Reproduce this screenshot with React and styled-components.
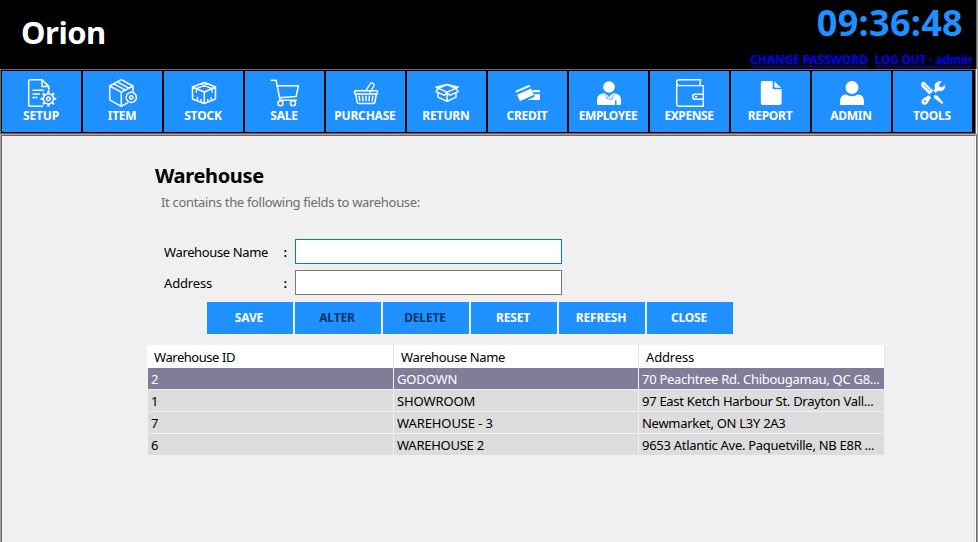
import React from "react";
import styled, { createGlobalStyle } from "styled-components";

const Global = createGlobalStyle`
  * { box-sizing: border-box; }
  body { margin: 0; background: #f0f0f0; overflow: hidden; }
  button, input { font: inherit; }
`;
const Window = styled.div`
  width: 978px; height: 542px; display: flex; flex-direction: column;
  background: #f0f0f0; color: #000; overflow: hidden;
  border-right: 1px solid #a0a0a0;
  font-family: "Noto Sans", "Open Sans", sans-serif; font-size: 13px; line-height: 18px;
`;
const Header = styled.header`
  height: 69px; flex: none; display: flex; justify-content: space-between;
  background: #000; border-right: 1px solid #696969;
`;
const Brand = styled.h1`
  margin: 0; padding: 11px 0 0 21px; color: #fff;
  font-size: 31px; line-height: 42px; font-weight: 700; letter-spacing: -0.5px;
`;
const Session = styled.div`display: flex; flex-direction: column; align-items: flex-end;`;
const Clock = styled.time`
  height: 52px; padding: 0 13px 0 0; color: #1e90ff; font-size: 36px; line-height: 45px; font-weight: 700;
  white-space: nowrap; letter-spacing: 0.3px;
`;
const Links = styled.nav`display: flex; gap: 7px; padding-right: 4px;`;
const SessionLink = styled.a`
  color: #0000f5; font-size: 12px; line-height: 16px; font-weight: 700; text-decoration: underline;
  text-decoration-skip-ink: none; text-underline-offset: 2px; text-decoration-thickness: 1px;
  white-space: nowrap; letter-spacing: ${(p) => p.$track || 0}px;
`;
const Toolbar = styled.nav`
  height: 65px; flex: none; display: flex; gap: 2px; padding: 1px 0 1px 1px; width: 976px;
  background: #000; border: 1px solid #696969;
`;
const Tool = styled.button`
  width: 79px; height: 61px; padding: 8px 0 0; border: 0; flex: none; background: #1e90ff; color: #fff;
  display: flex; flex-direction: column; align-items: center;
`;
const Glyph = styled.svg`width: 28px; height: 28px; flex: none; margin-left: 1px; overflow: visible;`;
const ToolLabel = styled.span`
  margin-top: 1px; padding-right: 1px;
  font-size: 12px; line-height: 16px; font-weight: 700; white-space: nowrap; letter-spacing: ${(p) => p.$track || 0}px;
`;
const Panel = styled.div`
  flex: 1; border: solid #a0a0a0; border-width: 1px 0 0 1px; border-right: 1px solid #696969; display: flex;
`;
const Workspace = styled.main`
  flex: 1; border: solid #696969; border-width: 1px 0 0 1px; border-right: 1px solid #fff;
  box-shadow: inset -1px 0 0 #e3e3e3; padding: 27px 0 0 145px;
`;
const Title = styled.h2`
  margin: 0 0 0 8px; font-size: 20px; line-height: 26px; font-weight: 700; letter-spacing: -0.35px;
`;
const Hint = styled.p`margin: 4px 0 0 14px; color: #6d6d6d; letter-spacing: -0.32px;`;
const Form = styled.form`display: grid; gap: 6px; margin: 28px 0 0 17px;`;
const Field = styled.label`
  display: grid; grid-template-columns: 119px 12px 267px; align-items: center; height: 25px;
`;
const FieldName = styled.span`letter-spacing: ${(p) => p.$track || 0}px; white-space: nowrap;`;
const Colon = styled.span`font-weight: 600; padding-left: 0.5px;`;
const Input = styled.input`
  width: 267px; height: 25px; border: 1px solid ${(p) => (p.$active ? "#0078d7" : "#7a7a7a")};
  border-radius: 0; background: #fff; padding: 2px 4px; outline: 0;
`;
const Actions = styled.div`display: flex; gap: 2px; margin: 7px 0 0 60px;`;
const Action = styled.button`
  width: 86px; height: 32px; padding: 0 2px 0 0; border: 0; background: #1e90ff;
  color: ${(p) => (p.disabled ? "#0b3566" : "#fff")};
  font-size: 12px; line-height: 16px; font-weight: 700; letter-spacing: -0.15px;
`;
const Table = styled.div`margin-top: 11px; width: 738px;`;
const HeadRow = styled.div`
  display: grid; grid-template-columns: 247px 245px 246px; height: 23px; background: #fff;
`;
const HeadCell = styled.div`
  padding: 3px 0 0 7px; border-right: 1px solid #e5e5e5; letter-spacing: ${(p) => p.$track || 0}px;
`;
const Row = styled.div`
  display: grid; grid-template-columns: 245px 244px 245px; gap: 1px; height: 21px; margin: 0 1px 1px;
  color: ${(p) => (p.$selected ? "#fff" : "#000")};
`;
const Cell = styled.div`
  padding: 2px 0 0 3px; height: 21px; white-space: nowrap; overflow: hidden;
  background: ${(p) => (p.$selected ? "#807d99" : "#dcdcdc")}; letter-spacing: ${(p) => p.$track || 0}px;
`;

const line = { fill: "none", stroke: "#fff", strokeWidth: 1.5, strokeLinejoin: "round", strokeLinecap: "round" };
const solid = { fill: "#fff" };
const teeth = [0, 45, 90, 135, 180, 225, 270, 315];

const glyphs = {
  SETUP: (
    <g {...line}>
      <path d="M14.5 27.3H2.2Q.7 27.3.7 25.8V2.2Q.7.7 2.2.7H14L20.7 7.4V11M14 .7V7.4H20.7M5 11.3H15.3M5 15H11.3M5 18.5H9" />
      <circle cx="20.4" cy="19.8" r="5.1" />
      <circle cx="20.4" cy="19.8" r="1.8" />
      {teeth.map((a) => (
        <path key={a} strokeWidth="2.2" strokeLinecap="butt" d="M20.4 14.6V12" transform={`rotate(${a} 20.4 19.8)`} />
      ))}
    </g>
  ),
  ITEM: (
    <g {...line}>
      <path d="M18.5 23.8L12.3 27.3.7 20.8V7L12.3.7 24 7V12.5M.7 7L12.3 13.2 24 7M12.3 13.2V27M4.8 4.9L16.6 11.1M8.3 2.9L20 9.2" />
      <circle cx="22.3" cy="18.4" r="5.1" />
      <circle cx="22.3" cy="18.4" r="1.7" />
    </g>
  ),
  STOCK: (
    <g {...line}>
      <path d="M14.3 3.5L25.5 8V20L14.3 24.5 2.5 20V8ZM2.5 8L14.3 13 25.5 8M14.3 13V24.5" />
      <path strokeWidth="1.3" d="M10.6 5L22 9.6M18 5L6.4 9.7M6.4 9.7V13.2M22 9.6V13.2M7.5 18.5V21.6M21.2 18.5V21.6M10.9 20.5V23M17.8 20.5V23" />
    </g>
  ),
  SALE: (
    <g {...line}>
      <path d="M.2 1.2H5L9.2 21.3H25.3M6.2 6.7H27.4L25.2 17.4 8.5 18.7" />
      <circle cx="9.4" cy="24.3" r="2.5" />
      <circle cx="22" cy="24.3" r="2.5" />
    </g>
  ),
  PURCHASE: (
    <g {...line}>
      <rect x="2.5" y="11.8" width="23" height="3.3" rx="1" />
      <path d="M3.7 15.2L5 22.8Q5.3 24.4 6.8 24.4H21.3Q22.8 24.4 23 22.8L24.4 15.2M7.2 17.2L7.8 21.8M10.6 17.2L11 21.8M14 17.2V21.8M17.4 17.2L17.1 21.8M20.8 17.2L20.3 21.8" />
      <path strokeWidth="1.3" d="M13.8 11.8L18.2 4.8Q19 3.4 20.8 4.3 22.6 5.2 21.9 6.8L18 13.4" />
    </g>
  ),
  RETURN: (
    <g {...line} strokeWidth="1.4">
      <path d="M14 5.5L5.3 9.4 14 13.2 22.8 9.4ZM5.3 9.4L3 12.6 11.4 16.4 14 13.2 16.7 16.4 25.2 12.6 22.8 9.4 25.2 8.3 14 5.5 3 8.3 5.3 9.4M5 14V18.2L14 22.3 23 18.2V14M14 13.2V22" />
    </g>
  ),
  CREDIT: (
    <g {...solid}>
      <g transform="rotate(-24 10.8 14)">
        <path d="M3 9.3Q3 8.3 4 8.3H17.5Q18.5 8.3 18.5 9.3V10.3H3ZM3 12.4H18.5V18.5Q18.5 19.5 17.5 19.5H4Q3 19.5 3 18.5Z" />
      </g>
      <path d="M18.5 11H25Q26 11 26 12V13.3H19.4ZM20.2 15.2H26V20Q26 21 25 21H13.3Q18 19.3 20.7 17.5Z" />
    </g>
  ),
  EMPLOYEE: (
    <g {...solid}>
      <circle cx="14" cy="8" r="5.8" />
      <path d="M10 14.2L14 17.5 18 14.2Q26 14.3 26 21V24.8Q26 26 24.8 26H21.5V21.2H20V26H3.2Q2 26 2 24.8V21Q2 14.3 10 14.2Z" />
      <path d="M9.8 14.5L12.2 18.8 14.2 17.3 17.2 19.7 19 14.8M10.6 18.8L16.2 20.8 18.5 18.8" stroke="#1e90ff" strokeWidth=".6" fill="none" />
    </g>
  ),
  EXPENSE: (
    <g {...line} strokeWidth="1.4">
      <path d="M2.6 6.6H27.3V27.3H3.2Q.7 27.3.7 24.8V3.2Q.7.7 3.2.7H24.7L23.8 6.4M.8 4.2Q.8 6.6 3.2 6.6M27.2 15.2H19Q16.6 15.2 16.6 17.7 16.6 20.2 19 20.2H27.2" />
      <path d="M19.4 17.7H20.6" />
    </g>
  ),
  REPORT: (
    <g {...solid}>
      <path d="M6 2H15.7V9Q15.7 10.3 17 10.3H24.6V24Q24.6 26 22.6 26H6Q3.8 26 3.8 24V4Q3.8 2 6 2Z" />
      <path d="M17.4 2.4L24.3 8.8H18.4Q17.4 8.8 17.4 7.8Z" />
    </g>
  ),
  ADMIN: (
    <g {...solid}>
      <circle cx="14" cy="8.5" r="6.5" />
      <path d="M8 15.6Q10.6 17.2 14 17.2T20 15.6Q26 16 26 23V26H2V23Q2 16 8 15.6Z" />
    </g>
  ),
  TOOLS: (
    <g {...solid}>
      <path d="M2.6 3.8Q4.8 1.9 6.8 3.9L14.4 11.6 10.4 15.6 2.9 8Q1.2 6 2.6 3.8Z" />
      <path d="M15.5 16L18.5 16.7 24.3 23.7 23.2 25 15 19Z" />
      <path d="M22.9 2.4L20 5.4 20.6 8 23.1 8.5 26 5.6Q26.6 9 24.3 11 22 13 19 11.8L16.7 14 14.3 11.7 16 9.2Q15 5.5 17.3 3.5 19.6 1.6 22.9 2.4Z" />
      <path d="M9.7 16.3L12 18.5 8.5 24.3Q6 27 3.3 24.9 1.4 22.3 4 19.8Z" />
      <path d="M5 5.7L11.3 12.2M6.7 4.3L13 10.7" stroke="#1e90ff" strokeWidth=".8" />
      <circle cx="6.2" cy="22.2" r="1" fill="#1e90ff" />
    </g>
  ),
};

const tools = [
  ["SETUP", -0.2], ["ITEM", -0.3], ["STOCK", -0.15], ["SALE", -0.25], ["PURCHASE", -0.2], ["RETURN", -0.15],
  ["CREDIT", -0.3], ["EMPLOYEE", -0.5], ["EXPENSE", -0.4], ["REPORT", -0.3], ["ADMIN", -0.3], ["TOOLS", -0.2],
];
const actions = ["SAVE", "ALTER", "DELETE", "RESET", "REFRESH", "CLOSE"];
const nameTracks = [-0.15, -0.1, -0.1, -0.25];
const rows = [
  ["2", "GODOWN", "70 Peachtree Rd. Chibougamau, QC G8..."],
  ["1", "SHOWROOM", "97 East Ketch Harbour St. Drayton Vall..."],
  ["7", "WAREHOUSE - 3", "Newmarket, ON L3Y 2A3"],
  ["6", "WAREHOUSE 2", "9653 Atlantic Ave. Paquetville, NB E8R ..."],
];

export default function App() {
  return (
    <Window>
      <Global />
      <Header>
        <Brand>Orion</Brand>
        <Session>
          <Clock>09:36:48</Clock>
          <Links>
            <SessionLink $track={-0.13}>CHANGE PASSWORD</SessionLink>
            <SessionLink $track={-0.27}>LOG OUT - admin</SessionLink>
          </Links>
        </Session>
      </Header>
      <Toolbar>
        {tools.map(([name, track]) => (
          <Tool key={name}>
            <Glyph viewBox="0 0 28 28">{glyphs[name]}</Glyph>
            <ToolLabel $track={track}>{name}</ToolLabel>
          </Tool>
        ))}
      </Toolbar>
      <Panel>
        <Workspace>
          <Title>Warehouse</Title>
          <Hint>It contains the following fields to warehouse:</Hint>
          <Form>
            <Field><FieldName $track={-0.36}>Warehouse Name</FieldName><Colon>:</Colon><Input $active /></Field>
            <Field><FieldName $track={-0.15}>Address</FieldName><Colon>:</Colon><Input /></Field>
          </Form>
          <Actions>
            {actions.map((name) => (
              <Action key={name} disabled={name === "ALTER" || name === "DELETE"}>{name}</Action>
            ))}
          </Actions>
          <Table>
            <HeadRow>
              <HeadCell $track={-0.45}>Warehouse ID</HeadCell>
              <HeadCell $track={-0.36}>Warehouse Name</HeadCell>
              <HeadCell $track={-0.15}>Address</HeadCell>
            </HeadRow>
            {rows.map(([id, name, address], i) => (
              <Row key={id} $selected={i === 0}>
                <Cell $selected={i === 0}>{id}</Cell>
                <Cell $selected={i === 0} $track={nameTracks[i]}>{name}</Cell>
                <Cell $selected={i === 0} $track={-0.28}>{address}</Cell>
              </Row>
            ))}
          </Table>
        </Workspace>
      </Panel>
    </Window>
  );
}
